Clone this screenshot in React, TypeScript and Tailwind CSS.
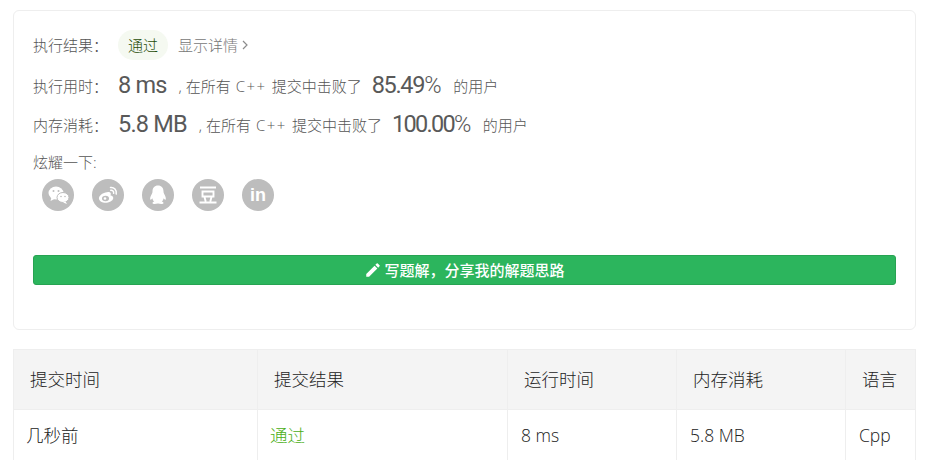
const cjk = '"Open Sans","Noto Sans CJK SC",sans-serif';

function Stat({ label, value, beat, top, track }: { label: string; value: string; beat: string; top: string; track: string }) {
  return (
    <div className={`flex items-center h-[28px] ${top} text-[15px] text-[#555]`}>
      <span className="w-[85px] shrink-0">{label}</span>
      <span className="text-[23.5px] font-normal text-[#595959] tracking-[-0.8px]" style={{ fontFamily: 'Roboto,sans-serif' }}>{value}</span>
      <span className="ml-[12px]">,&nbsp;在所有</span>
      <span className="ml-[5px] mr-[5px] tracking-[1.5px]">C++</span>
      <span>提交中击败了</span>
      <span className={`ml-[10px] text-[23.5px] font-normal text-[#595959] ${track}`} style={{ fontFamily: 'Roboto,sans-serif' }}>{beat}<span className="font-light">%</span></span>
      <span className="ml-[13px]">的用户</span>
    </div>
  );
}

function Social({ children }: { children: React.ReactNode }) {
  return (
    <span className="w-[32px] h-[32px] rounded-full bg-[#bdbdbd] flex items-center justify-center text-white">
      {children}
    </span>
  );
}

const cols = ['w-[244px]', 'w-[250px]', 'w-[169px]', 'w-[169px]', 'w-[70px]'];

export default function App() {
  return (
    <div className="w-[926px] h-[460px] overflow-hidden bg-white pl-[13px] pt-[10px] font-light" style={{ fontFamily: cjk }}>
      <div className="w-[903px] h-[320px] border border-[#eeeeee] rounded-[6px] px-[19px] pt-[19px]">
        <div className="flex items-center h-[30px] text-[15px] text-[#555]">
          <span className="w-[85px] shrink-0">执行结果：</span>
          <span className="h-[30px] w-[50px] rounded-full bg-[#f5f9f1] text-[#1f4d08] flex items-center justify-center">通过</span>
          <span className="ml-[10px] text-[#777]">显示详情</span>
          <svg width="6" height="10" viewBox="0 0 6 10" className="ml-[4px]" fill="none" stroke="#8c8c8c" strokeWidth="1.2"><path d="M1 1l4 4-4 4" /></svg>
        </div>
        <Stat top="mt-[12px]" track="tracking-[-1.3px]" label="执行用时：" value="8 ms" beat="85.49" />
        <Stat top="mt-[11px]" track="tracking-[-1.7px]" label="内存消耗：" value="5.8 MB" beat="100.00" />
        <div className="mt-[13px] text-[15px] text-[#555] h-[20px] leading-[20px]">炫耀一下:</div>
        <div className="flex gap-[18px] ml-[9px] mt-[7px]">
          <Social>
            <svg width="23" height="20" viewBox="0 0 22 20" fill="currentColor">
              <ellipse cx="8.5" cy="8" rx="7.5" ry="6.5" />
              <path d="M4 12l-1 4 4-2z" />
              <circle cx="6" cy="6" r="1" fill="#bdbdbd" />
              <circle cx="11" cy="6" r="1" fill="#bdbdbd" />
              <ellipse cx="15.5" cy="12.5" rx="6" ry="5" stroke="#bdbdbd" strokeWidth="1" />
              <path d="M18 16.5l1.5 2.5-4-1.5z" />
              <circle cx="13.500" cy="11.500" r=".8" fill="#bdbdbd" />
              <circle cx="17.500" cy="11.500" r=".8" fill="#bdbdbd" />
            </svg>
          </Social>
          <Social>
            <svg width="22" height="20" viewBox="0 0 22 20" fill="none">
              <path d="M8.5 7.5C4.5 8.500 1.500 11.500 2 14c.6 3 5 4.500 9 3.500s6-3.500 5-5.500c-.5-1-1.500-1.500-2.500-1.500.5-1.500.5-3-.8-3.200C11.300 6.600 10 7 8.500 7.500z" fill="currentColor" />
              <ellipse cx="8.500" cy="13.500" rx="3.500" ry="2.800" fill="#bdbdbd" />
              <circle cx="8" cy="13.500" r="1.300" fill="currentColor" />
              <path d="M13.500 2.500c3.500-.5 6.500 2.500 5.700 6.500M13.800 5.300c1.800-.2 3.200 1.200 2.800 3" stroke="currentColor" strokeWidth="1.500" strokeLinecap="round" />
            </svg>
          </Social>
          <Social>
            <svg width="20" height="22" viewBox="0 0 20 22" fill="currentColor">
              <path d="M10 1.500c-3.500 0-5.500 2.500-5.500 6 0 1-.2 1.500-.7 2.500C2.700 12 1.800 14 2.300 15.500c.5.800 1.500-.3 2-1.200.4 1.500 1 2.500 2 3.300-1.200.4-2 1-1.800 1.700.3.900 3 .9 5.500.2 2.500.7 5.200.7 5.500-.2.200-.7-.6-1.300-1.800-1.700 1-.8 1.600-1.800 2-3.300.5.900 1.500 2 2 1.200.5-1.500-.4-3.500-1.500-5.500-.5-1-.7-1.500-.7-2.500 0-3.500-2-6-5.500-6z" />
            </svg>
          </Social>
          <Social>
            <svg width="20" height="20" viewBox="0 0 20 20" fill="none" stroke="currentColor" strokeWidth="1.900">
              <path d="M2 2.500h16M4.500 6.500h11v5h-11zM6.500 12l1.200 4.500M13.500 12l-1.200 4.500M1.500 17.500h17" />
            </svg>
          </Social>
          <Social>
            <span className="text-[18px] font-bold leading-none" style={{ fontFamily: '"Liberation Sans",sans-serif' }}>in</span>
          </Social>
        </div>
        <button className="mt-[44px] w-[863px] h-[30px] rounded-[3px] bg-[#2cb55d] border border-[#27a352] text-white text-[15px] font-medium flex items-center justify-center">
          <svg width="18" height="18" viewBox="0 0 24 24" fill="currentColor" className="mr-[2px]">
            <path d="M3 17.250V21h3.750L17.810 9.940l-3.750-3.750L3 17.250zM20.710 7.040a1 1 0 0 0 0-1.410l-2.340-2.340a1 1 0 0 0-1.410 0l-1.830 1.830 3.750 3.750 1.830-1.830z" />
          </svg>
          写题解，分享我的解题思路
        </button>
      </div>
      <table className="mt-[19px] w-[902px] table-fixed border-collapse text-[17.500px] text-[#222]">
        <colgroup>
          {cols.map((c, i) => (
            <col key={i} className={c} />
          ))}
        </colgroup>
        <thead>
          <tr className="h-[60px] bg-[#f4f4f4]">
            {['提交时间', '提交结果', '运行时间', '内存消耗', '语言'].map((h) => (
              <th key={h} className="border border-[#eeeeee] font-light text-left pl-[16px]">{h}</th>
            ))}
          </tr>
        </thead>
        <tbody>
          <tr className="h-[52px]">
            <td className="border border-[#eeeeee] pl-[12px]">几秒前</td>
            <td className="border border-[#eeeeee] pl-[12px] text-[#4aae16]">通过</td>
            <td className="border border-[#eeeeee] pl-[13px]">8 ms</td>
            <td className="border border-[#eeeeee] pl-[13px]">5.8 MB</td>
            <td className="border border-[#eeeeee] pl-[13px]">Cpp</td>
          </tr>
        </tbody>
      </table>
    </div>
  );
}
